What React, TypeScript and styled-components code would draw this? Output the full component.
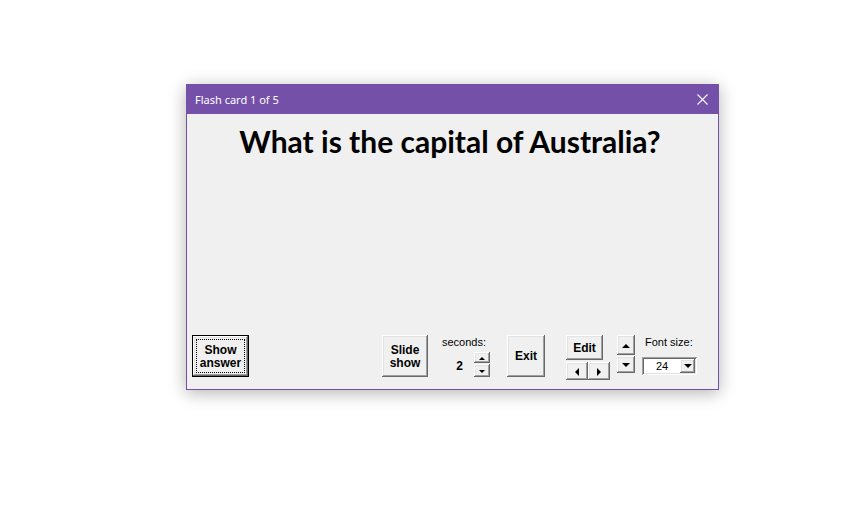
import React from 'react';
import styled, { createGlobalStyle, css } from 'styled-components';

const GlobalStyle = createGlobalStyle`
  html, body {
    margin: 0;
    padding: 0;
    background: #ffffff;
  }
  body {
    font-family: 'Liberation Sans', Arial, sans-serif;
  }
`;

const Page = styled.div`
  display: flex;
  align-items: flex-start;
  padding: 84px 0 0 186px;
  min-height: 527px;
  box-sizing: border-box;
`;

const Window = styled.div`
  width: 533px;
  display: flex;
  flex-direction: column;
  background: #7450a9;
  box-shadow: 0 3px 16px rgba(0, 0, 0, 0.3);
`;

const TitleBar = styled.div`
  height: 30px;
  display: flex;
  align-items: center;
  justify-content: space-between;
  padding: 0 10px 0 9px;
  color: #ffffff;
  font-family: 'Noto Sans', 'Open Sans', sans-serif;
  font-size: 11px;
`;

const CloseIcon = styled.svg`
  width: 11px;
  height: 11px;
  margin-right: 1px;
`;

const Body = styled.div`
  height: 275px;
  margin: 0 1px 1px;
  background: #f0f0f0;
  display: flex;
  flex-direction: column;
`;

const Question = styled.h1`
  margin: 9px 0 0;
  text-align: center;
  font-family: Lato, 'Noto Sans', sans-serif;
  font-weight: 700;
  font-size: 30px;
  line-height: 36px;
  color: #000000;
  padding-right: 5px;
`;

const Controls = styled.div`
  margin-top: auto;
  display: flex;
  align-items: flex-start;
  padding: 0 0 9px 5px;
  height: 45px;
  font-size: 12px;
`;

const raised = css`
  background: #f0f0f0;
  border: none;
  box-shadow:
    inset -1px -1px #696969,
    inset 1px 1px #ffffff,
    inset -2px -2px #a0a0a0,
    inset 2px 2px #e3e3e3;
`;

const Button = styled.button<{ $w: number; $h: number; $ml?: number }>`
  ${raised};
  width: ${(p) => p.$w}px;
  height: ${(p) => p.$h}px;
  margin-left: ${(p) => p.$ml ?? 0}px;
  padding: 1px 0 0;
  font-family: 'Liberation Sans', Arial, sans-serif;
  font-weight: 700;
  font-size: 12px;
  line-height: 13px;
  color: #000000;
  flex-shrink: 0;
  display: flex;
  align-items: center;
  justify-content: center;
`;

const DefaultButton = styled(Button)`
  border: 1px solid #000000;
  position: relative;

  &::after {
    content: '';
    position: absolute;
    inset: 3px;
    border: 1px dotted #000000;
  }
`;

const Column = styled.div<{ $ml?: number; $w?: number }>`
  display: flex;
  flex-direction: column;
  margin-left: ${(p) => p.$ml ?? 0}px;
  ${(p) => p.$w && `width: ${p.$w}px;`}
`;

const Label = styled.div<{ $pl?: number }>`
  margin-top: 1px;
  padding-left: ${(p) => p.$pl ?? 0}px;
  font-size: 11px;
  line-height: 13px;
  color: #000000;
  white-space: nowrap;
`;

const SpinRow = styled.div`
  display: flex;
  align-items: center;
  justify-content: flex-end;
  margin-top: 3px;
`;

const SpinValue = styled.span`
  font-weight: 700;
  font-size: 12px;
  margin-right: 11px;
  margin-top: 2px;
`;

const Stack = styled.div<{ $gap?: number }>`
  display: flex;
  flex-direction: column;
  gap: ${(p) => p.$gap ?? 1}px;
`;

const Row = styled.div<{ $mt?: number }>`
  display: flex;
  margin-top: ${(p) => p.$mt ?? 0}px;
`;

const Arrow = styled.span<{ $dir: 'up' | 'down' | 'left' | 'right'; $size: number }>`
  width: 0;
  height: 0;
  border-style: solid;
  border-color: transparent;
  ${({ $dir, $size }) => {
    const s = $size;
    switch ($dir) {
      case 'up':
        return `border-width: 0 ${s}px ${s}px ${s}px; border-bottom-color: #000;`;
      case 'down':
        return `border-width: ${s}px ${s}px 0 ${s}px; border-top-color: #000;`;
      case 'left':
        return `border-width: ${s}px ${s}px ${s}px 0; border-right-color: #000;`;
      default:
        return `border-width: ${s}px 0 ${s}px ${s}px; border-left-color: #000;`;
    }
  }}
`;

const Combo = styled.div`
  margin-top: 8px;
  width: 55px;
  height: 18px;
  box-sizing: border-box;
  background: #ffffff;
  display: flex;
  align-items: stretch;
  box-shadow:
    inset 1px 1px #a0a0a0,
    inset -1px -1px #ffffff,
    inset 2px 2px #696969,
    inset -2px -2px #e3e3e3;
  padding: 2px;
`;

const ComboText = styled.span`
  flex: 1;
  font-size: 11px;
  line-height: 14px;
  padding-left: 12px;
  color: #000000;
`;

const ComboButton = styled.span`
  ${raised};
  width: 15px;
  display: flex;
  align-items: center;
  justify-content: center;
`;

export default function App() {
  return (
    <>
      <GlobalStyle />
      <Page>
        <Window>
          <TitleBar>
            <span>Flash card 1 of 5</span>
            <CloseIcon viewBox="0 0 11 11">
              <path d="M0.5 0.5 L10.5 10.5 M10.5 0.5 L0.5 10.5" stroke="#ffffff" strokeWidth="1.1" />
            </CloseIcon>
          </TitleBar>
          <Body>
            <Question>What is the capital of Australia?</Question>
            <Controls>
              <DefaultButton $w={57} $h={42}>
                Show
                <br />
                answer
              </DefaultButton>
              <Button $w={46} $h={42} $ml={133}>
                Slide
                <br />
                show
              </Button>
              <Column $ml={14} $w={48}>
                <Label>seconds:</Label>
                <SpinRow>
                  <SpinValue>2</SpinValue>
                  <Stack>
                    <Button $w={16} $h={11}>
                      <Arrow $dir="up" $size={3} />
                    </Button>
                    <Button $w={16} $h={13}>
                      <Arrow $dir="down" $size={3} />
                    </Button>
                  </Stack>
                </SpinRow>
              </Column>
              <Button $w={38} $h={42} $ml={17}>
                Exit
              </Button>
              <Column $ml={21}>
                <Button $w={37} $h={25}>
                  Edit
                </Button>
                <Row $mt={2}>
                  <Button $w={22} $h={18}>
                    <Arrow $dir="left" $size={4} />
                  </Button>
                  <Button $w={22} $h={18}>
                    <Arrow $dir="right" $size={4} />
                  </Button>
                </Row>
              </Column>
              <Column $ml={7}>
                <Stack>
                  <Button $w={18} $h={20}>
                    <Arrow $dir="up" $size={4} />
                  </Button>
                  <Button $w={18} $h={17}>
                    <Arrow $dir="down" $size={4} />
                  </Button>
                </Stack>
              </Column>
              <Column $ml={7}>
                <Label $pl={3}>Font size:</Label>
                <Combo>
                  <ComboText>24</ComboText>
                  <ComboButton>
                    <Arrow $dir="down" $size={4} />
                  </ComboButton>
                </Combo>
              </Column>
            </Controls>
          </Body>
        </Window>
      </Page>
    </>
  );
}
